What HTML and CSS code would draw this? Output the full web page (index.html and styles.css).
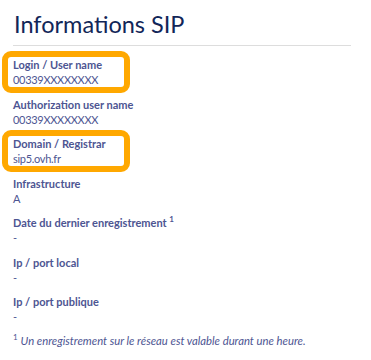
FILE: index.html
```html
<!DOCTYPE html>
<html lang="fr">
<head>
  <meta charset="UTF-8" />
  <meta name="viewport" content="width=device-width, initial-scale=1.0"/>
  <title>Informations SIP</title>
  <link rel="stylesheet" href="styles.css">
</head>
<body>

  <div class="panel">
    <h1>Informations SIP</h1>

    <dl class="fields">
      <div class="field highlight">
        <dt>Login / User name</dt>
        <dd>00339XXXXXXXX</dd>
      </div>
      <div class="field">
        <dt>Authorization user name</dt>
        <dd>00339XXXXXXXX</dd>
      </div>
      <div class="field highlight">
        <dt>Domain / Registrar</dt>
        <dd>sip5.ovh.fr</dd>
      </div>
      <div class="field">
        <dt>Infrastructure</dt>
        <dd>A</dd>
      </div>
      <div class="field">
        <dt>Date du dernier enregistrement <sup>1</sup></dt>
        <dd>-</dd>
      </div>
      <div class="field">
        <dt>Ip / port local</dt>
        <dd>-</dd>
      </div>
      <div class="field">
        <dt>Ip / port publique</dt>
        <dd>-</dd>
      </div>
    </dl>

    <p class="note"><sup>1</sup> <em>Un enregistrement sur le réseau est valable durant une heure.</em></p>
  </div>

</body>
</html>
```

FILE: styles.css
```css
body {
  font-family: Lato, "Open Sans", sans-serif;
  background-color: #ffffff;
  color: #4d5592;
  margin: 0;
}

.panel {
  width: 338px;
  padding: 9px 0 0 13px;
}

h1 {
  font-size: 23.5px;
  font-weight: normal;
  color: #122658;
  margin: 0;
  padding: 0 0 6px 1px;
  line-height: 30px;
  border-bottom: 1px solid #dddddd;
}

.fields {
  margin: 11px 0 0 -5px;
}

.field {
  padding: 0 5px;
  height: 30px;
  margin-bottom: 9.5px;
}

.highlight {
  width: 106px;
  outline: 6px solid #ffa800;
  border-radius: 3px;
}

dt {
  font-size: 11px;
  font-weight: bold;
  line-height: 16px;
}

dd {
  margin: 0;
  font-size: 11px;
  line-height: 14px;
  letter-spacing: -0.3px;
}

sup {
  font-size: 8px;
  line-height: 0;
}

.note {
  font-size: 11.3px;
  margin: 4px 0 0;
}
```
